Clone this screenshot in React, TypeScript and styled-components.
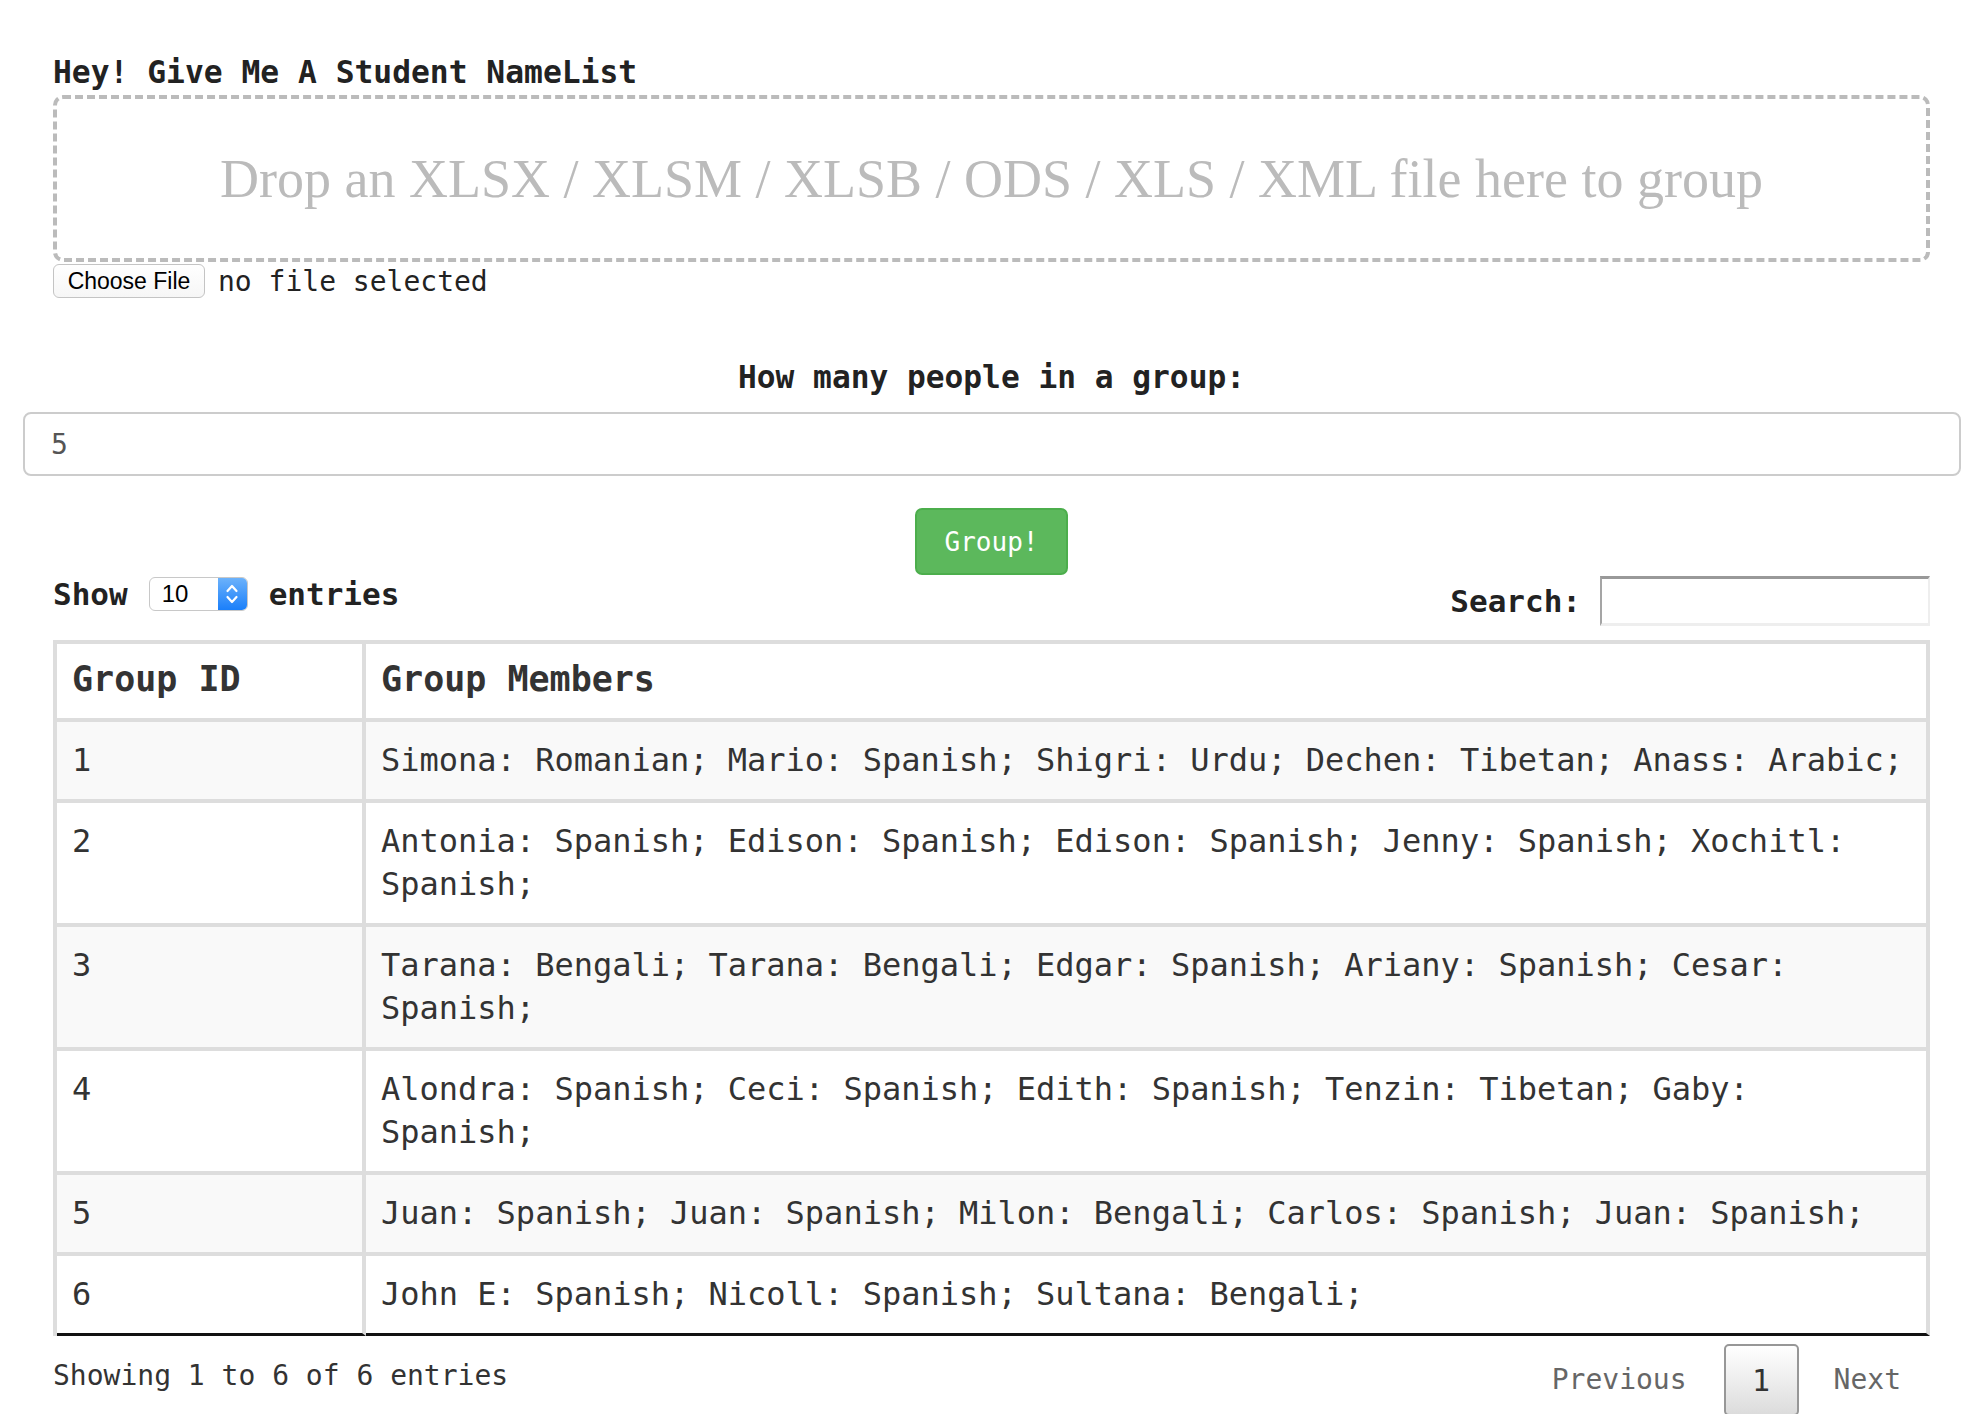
import styled, { createGlobalStyle } from "styled-components";

const GlobalStyle = createGlobalStyle`
  body {
    margin: 0;
    background: #fff;
    font-family: "DejaVu Sans Mono", monospace;
    color: #333;
  }
  * {
    box-sizing: border-box;
  }
`;

const Page = styled.div`
  padding: 50px 56px 0 53px;
  height: 1414px;
  overflow: hidden;
`;

const Heading = styled.h3`
  margin: 0;
  font-size: 31.3px;
  line-height: 45px;
  font-weight: bold;
  color: #222;
`;

const DropZone = styled.div`
  height: 167px;
  border: 4px dashed #bbb;
  border-radius: 10px;
  display: flex;
  align-items: center;
  justify-content: center;
  font-family: "Liberation Serif", serif;
  font-size: 54px;
  color: #bbb;
`;

const FileRow = styled.div`
  display: flex;
  align-items: center;
  gap: 13px;
  margin-top: 2px;
`;

const ChooseButton = styled.button`
  width: 152px;
  height: 34px;
  padding: 0;
  font-family: "Liberation Sans", Arial, sans-serif;
  font-size: 23px;
  color: #000;
  background: linear-gradient(#fff, #f6f6f6);
  border: 1px solid #c4c4c4;
  border-radius: 6px;
`;

const FileName = styled.span`
  font-size: 28px;
  color: #222;
`;

const Question = styled.div`
  margin-top: 57px;
  text-align: center;
  font-size: 31.2px;
  line-height: 44px;
  font-weight: bold;
  color: #222;
`;

const NumberInput = styled.input`
  display: block;
  width: calc(100% + 61px);
  margin: 13px -31px 0 -30px;
  height: 64px;
  padding: 0 0 0 26px;
  border: 2px solid #ccc;
  border-radius: 8px;
  font-family: "DejaVu Sans Mono", monospace;
  font-size: 28px;
  color: #555;
  outline: none;
`;

const ButtonRow = styled.div`
  display: flex;
  justify-content: center;
  margin-top: 32px;
`;

const GroupButton = styled.button`
  width: 153px;
  height: 67px;
  background: #5cb85c;
  border: 2px solid #4cae4c;
  border-radius: 7px;
  color: #fff;
  font-family: "DejaVu Sans Mono", monospace;
  font-size: 26px;
`;

const Controls = styled.div`
  display: flex;
  justify-content: space-between;
  margin-top: 1px;
  height: 50px;
`;

const Length = styled.label`
  display: flex;
  align-items: center;
  height: 36px;
  gap: 21px;
  font-size: 31px;
  font-weight: bold;
  color: #222;
`;

const SelectBox = styled.div`
  display: flex;
  width: 99px;
  height: 34px;
  border: 1px solid #c8c8c8;
  border-radius: 6px;
  overflow: hidden;
  background: #fff;
`;

const SelectValue = styled.span`
  flex: 1;
  padding-left: 12px;
  display: flex;
  align-items: center;
  font-family: "Liberation Sans", Arial, sans-serif;
  font-weight: normal;
  font-size: 24px;
  color: #000;
`;

const SelectArrow = styled.span`
  width: 29px;
  display: flex;
  align-items: center;
  justify-content: center;
  background: linear-gradient(#6cb2fb, #1a7ffa);
`;

const Filter = styled.label`
  display: flex;
  align-items: center;
  gap: 19px;
  font-size: 31px;
  font-weight: bold;
  color: #222;
`;

const SearchInput = styled.input`
  width: 330px;
  height: 50px;
  border-top: 3px solid #999;
  border-left: 2px solid #a5a5a5;
  border-right: 2px solid #eee;
  border-bottom: 3px solid #eee;
  outline: none;
  background: #fff;
`;

const Table = styled.table`
  width: 100%;
  margin-top: 14px;
  border-spacing: 0;
  border-top: 4px solid #ddd;
  border-left: 4px solid #ddd;
  color: #333;
`;

const HeadCell = styled.th<{ $first?: boolean }>`
  width: ${(p) => (p.$first ? "309px" : "auto")};
  padding: 13px 16px 17px 15px;
  text-align: left;
  font-size: 35px;
  line-height: 44px;
  font-weight: bold;
  color: #333;
  border-right: 4px solid #ddd;
  border-bottom: 4px solid #ddd;
`;

const Row = styled.tr<{ $odd: boolean }>`
  background: ${(p) => (p.$odd ? "#f9f9f9" : "#fff")};
`;

const Cell = styled.td<{ $last: boolean }>`
  padding: 17px 16px 17px 15px;
  vertical-align: top;
  font-size: 32px;
  line-height: 43px;
  border-right: 4px solid #ddd;
  border-bottom: ${(p) => (p.$last ? "3px solid #111" : "4px solid #ddd")};
`;

const Footer = styled.div`
  display: flex;
  justify-content: space-between;
  align-items: flex-start;
`;

const Info = styled.div`
  margin-top: 20px;
  font-size: 28px;
  line-height: 40px;
  color: #333;
`;

const Pagination = styled.div`
  display: flex;
  align-items: center;
  margin-top: 8px;
  padding-right: 29px;
`;

const PageLink = styled.span`
  font-size: 28px;
  line-height: 40px;
  color: #666;
`;

const PageCurrent = styled.span`
  width: 75px;
  height: 72px;
  margin: 0 35px 0 37px;
  display: flex;
  align-items: center;
  justify-content: center;
  border: 2px solid #979797;
  border-radius: 5px;
  background: linear-gradient(#fff, #dcdcdc);
  font-size: 30px;
  color: #333;
`;

const groups = [
  "Simona: Romanian; Mario: Spanish; Shigri: Urdu; Dechen: Tibetan; Anass: Arabic;",
  "Antonia: Spanish; Edison: Spanish; Edison: Spanish; Jenny: Spanish; Xochitl: Spanish;",
  "Tarana: Bengali; Tarana: Bengali; Edgar: Spanish; Ariany: Spanish; Cesar: Spanish;",
  "Alondra: Spanish; Ceci: Spanish; Edith: Spanish; Tenzin: Tibetan; Gaby: Spanish;",
  "Juan: Spanish; Juan: Spanish; Milon: Bengali; Carlos: Spanish; Juan: Spanish;",
  "John E: Spanish; Nicoll: Spanish; Sultana: Bengali;",
];

const Chevrons = () => (
  <svg width="16" height="26" viewBox="0 0 16 26" fill="none" stroke="#fff" strokeWidth="2.2" strokeLinecap="round" strokeLinejoin="round">
    <path d="M3.5 10 L8 5 L12.5 10" />
    <path d="M3.5 16 L8 21 L12.5 16" />
  </svg>
);

const App = () => (
  <>
    <GlobalStyle />
    <Page>
      <Heading>Hey! Give Me A Student NameList</Heading>
      <DropZone>Drop an XLSX / XLSM / XLSB / ODS / XLS / XML file here to group</DropZone>
      <FileRow>
        <ChooseButton>Choose File</ChooseButton>
        <FileName>no file selected</FileName>
      </FileRow>

      <Question>How many people in a group:</Question>
      <NumberInput defaultValue="5" />

      <ButtonRow>
        <GroupButton>Group!</GroupButton>
      </ButtonRow>

      <Controls>
        <Length>
          Show
          <SelectBox>
            <SelectValue>10</SelectValue>
            <SelectArrow>
              <Chevrons />
            </SelectArrow>
          </SelectBox>
          entries
        </Length>
        <Filter>
          Search:
          <SearchInput />
        </Filter>
      </Controls>

      <Table>
        <thead>
          <tr>
            <HeadCell $first>Group ID</HeadCell>
            <HeadCell>Group Members</HeadCell>
          </tr>
        </thead>
        <tbody>
          {groups.map((members, i) => (
            <Row key={i} $odd={i % 2 === 0}>
              <Cell $last={i === groups.length - 1}>{i + 1}</Cell>
              <Cell $last={i === groups.length - 1}>{members}</Cell>
            </Row>
          ))}
        </tbody>
      </Table>

      <Footer>
        <Info>Showing 1 to 6 of 6 entries</Info>
        <Pagination>
          <PageLink>Previous</PageLink>
          <PageCurrent>1</PageCurrent>
          <PageLink>Next</PageLink>
        </Pagination>
      </Footer>
    </Page>
  </>
);

export default App;
